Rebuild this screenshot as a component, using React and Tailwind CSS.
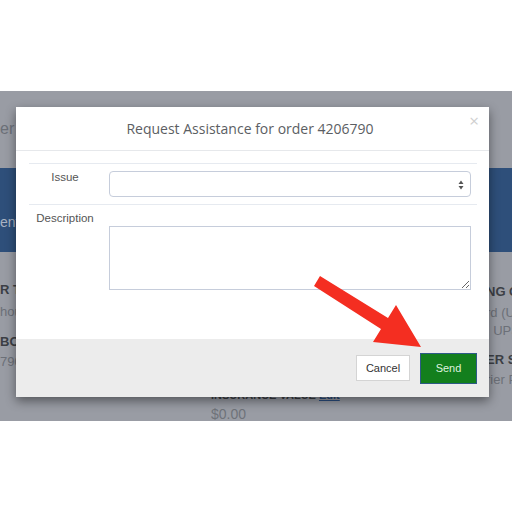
import React from "react";

export default function App() {
  return (
    <div className="relative w-[512px] h-[512px] overflow-hidden bg-white font-['Liberation_Sans',Arial,sans-serif]">
      <div className="h-[91px]" />
      <div className="relative h-[330px] overflow-hidden bg-[#999ca4]">
        {/* dimmed page behind */}
        <div className="h-[77px] pt-[29px] text-[16px] leading-[18px] text-[#6c7078] whitespace-nowrap">
          er 2019
        </div>
        <div className="h-[84px] bg-[#2e4f7a] pt-[45px] text-[14px] leading-[18px] text-[#a9b3c3] whitespace-nowrap">
          ents
        </div>
        <div className="flex text-[13px] leading-[18px] text-[#6c7078] whitespace-nowrap">
          <div className="w-[211px] shrink-0 pt-[29px]">
            <div className="font-bold text-[#3c3f45]">R TYPE</div>
            <div className="mt-[4px]">house</div>
            <div className="mt-[12px] font-bold text-[#3c3f45]">BOE</div>
            <div className="mt-[2px]">790</div>
          </div>
          <div className="w-[275px] shrink-0 pt-[134px]">
            <div className="font-bold text-[11px] text-[#3c3f45]">
              INSURANCE VALUE <span className="underline text-[#2b4f80]">Edit</span>
            </div>
            <div className="mt-[1px] text-[14px] text-[#6f737a]">$0.00</div>
          </div>
          <div className="shrink-0 pt-[31px]">
            <div className="font-bold text-[#3c3f45]">NG CARRIER</div>
            <div className="mt-[3px]">rd (UPS)</div>
            <div>, UPS</div>
            <div className="mt-[11px] font-bold text-[#3c3f45]">ER SERVICE</div>
            <div className="mt-[2px]">rier Pickup</div>
          </div>
        </div>

        {/* modal */}
        <div className="absolute left-[16px] top-[16px] w-[473px] h-[290px] bg-white flex flex-col shadow-[0_4px_10px_rgba(0,0,0,0.45)]">
          <div className="relative h-[44px] border-b border-[#e6e8eb] flex items-center justify-center pr-[5px]">
            <span className="font-['Open_Sans',sans-serif] text-[14px] text-[#5b5e63]">
              Request Assistance for order 4206790
            </span>
            <span className="absolute right-[10px] top-[5px] text-[17px] leading-[18px] text-[#cfcfcf] font-['Open_Sans',sans-serif]">
              ×
            </span>
          </div>
          <div className="flex-1 pt-[12px] pl-[13px] pr-[12px]">
            <div className="flex items-start border-t border-b border-[#e6eaf0] pt-[7px] pb-[7px]">
              <div className="w-[72px] -mt-[2px] text-center text-[11.5px] leading-[16px] text-[#555]">Issue</div>
              <div className="ml-[8px] mr-[6px] flex-1 h-[26px] rounded-[4px] border border-[#c6cddb] relative">
                <svg className="absolute right-[6px] top-[8px]" width="6" height="10" viewBox="0 0 6 10">
                  <path d="M3 0.5 L5.5 4 L0.5 4 Z" fill="#555" />
                  <path d="M3 9.5 L5.5 6 L0.5 6 Z" fill="#555" />
                </svg>
              </div>
            </div>
            <div className="flex">
              <div className="w-[72px] pt-[5px] text-center text-[11.5px] leading-[16px] text-[#555]">Description</div>
              <div className="ml-[8px] mr-[6px] flex-1 pt-[21px]">
                <textarea className="block w-full h-[64px] border border-[#c6cddb] outline-none" />
              </div>
            </div>
          </div>
          <div className="h-[58px] bg-[#ececec] flex items-center justify-end gap-[10px] pr-[12px]">
            <div className="w-[54px] h-[26px] bg-white border border-[#d4d4d4] flex items-center justify-center text-[11px] text-[#333]">
              Cancel
            </div>
            <div className="w-[57px] h-[31px] bg-[#137f1d] border border-[#2d5a86] flex items-center justify-center text-[11px] text-[#dff2df]">
              Send
            </div>
          </div>
        </div>
      </div>

      <svg className="absolute left-0 top-0 pointer-events-none" width="512" height="512" viewBox="0 0 512 512">
        <polygon
          points="320,276 388,318 396,305 421,347 373,342 381,329 314,286"
          fill="#f42e21"
        />
      </svg>
    </div>
  );
}
